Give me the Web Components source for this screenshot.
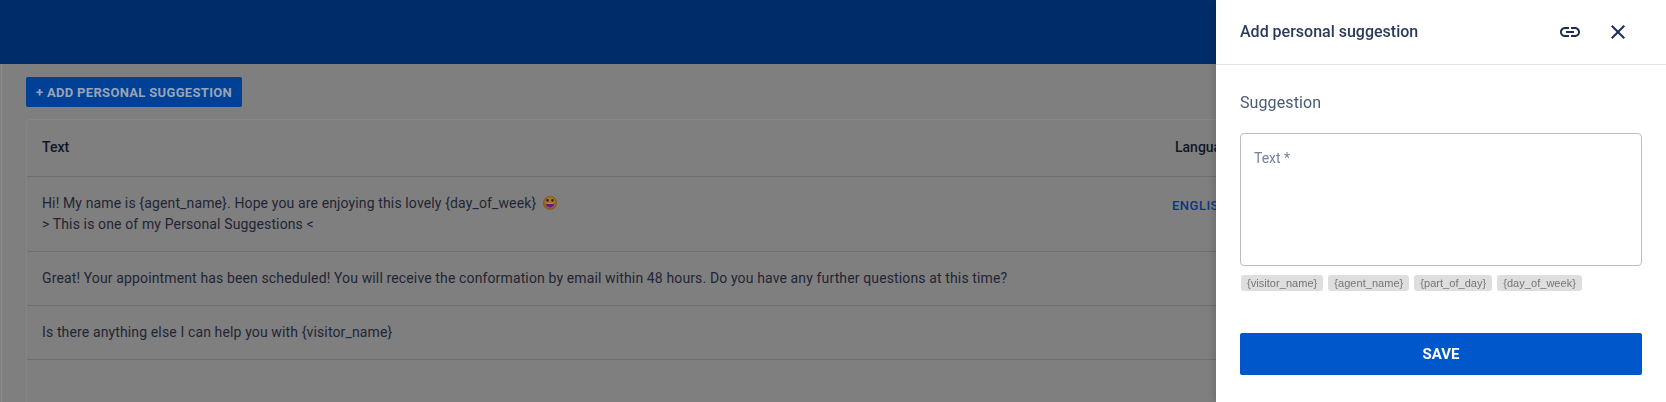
<!DOCTYPE html>
<html>
<head>
<meta charset="utf-8">
<title>Personal suggestions</title>
<style>
  html, body { margin: 0; height: 402px; overflow: hidden; background: #7f7f7f; }
  body { font-family: Roboto, "Liberation Sans", sans-serif; }
</style>
</head>
<body>
<suggestions-page>
  <add-button>+ ADD PERSONAL SUGGESTION</add-button>
  <suggestion-table>
    <suggestion-row lang="ENGLISH">Hi! My name is {agent_name}. Hope you are enjoying this lovely {day_of_week} <grin-emoji></grin-emoji><br>&gt; This is one of my Personal Suggestions &lt;</suggestion-row>
    <suggestion-row>Great! Your appointment has been scheduled! You will receive the conformation by email within 48 hours. Do you have any further questions at this time?</suggestion-row>
    <suggestion-row>Is there anything else I can help you with {visitor_name}</suggestion-row>
  </suggestion-table>
</suggestions-page>
<side-panel heading="Add personal suggestion">
  <tag-chip>{visitor_name}</tag-chip>
  <tag-chip>{agent_name}</tag-chip>
  <tag-chip>{part_of_day}</tag-chip>
  <tag-chip>{day_of_week}</tag-chip>
</side-panel>

<script>
class SuggestionsPage extends HTMLElement {
  constructor() {
    super();
    this.attachShadow({ mode: "open" });
    this.shadowRoot.innerHTML = `
      <style>
        :host { display: flex; flex-direction: column; height: 402px; overflow: hidden; }
        .top { height: 64px; flex: none; background: #002d69; }
        .main {
          flex: 1;
          margin-left: 1px;
          border-left: 1px solid #8c8c8c;
          padding: 13px 26px 0 24px;
          display: flex;
          flex-direction: column;
          gap: 12px;
          align-items: flex-start;
        }
      </style>
      <div class="top"></div>
      <div class="main"><slot></slot></div>
    `;
  }
}
customElements.define("suggestions-page", SuggestionsPage);

class AddButton extends HTMLElement {
  constructor() {
    super();
    this.attachShadow({ mode: "open" });
    this.shadowRoot.innerHTML = `
      <style>
        :host {
          display: flex;
          align-items: center;
          height: 30px;
          padding: 0 10px;
          background: #004097;
          border-radius: 2px;
          color: #9aa4b4;
          font: 700 13px Roboto, sans-serif;
          letter-spacing: .32px;
          white-space: nowrap;
        }
      </style>
      <slot></slot>
    `;
  }
}
customElements.define("add-button", AddButton);

class SuggestionTable extends HTMLElement {
  constructor() {
    super();
    this.attachShadow({ mode: "open" });
    this.shadowRoot.innerHTML = `
      <style>
        :host {
          display: block;
          flex: 1;
          align-self: stretch;
          border: 1px solid #868686;
          border-bottom: 0;
          border-radius: 4px 4px 0 0;
          font: 14px/21px Roboto, sans-serif;
          letter-spacing: .13px;
          color: #1f2533;
        }
        .head {
          display: grid;
          grid-template-columns: 1148px 1fr;
          height: 57px;
          box-sizing: border-box;
          padding-bottom: 2px;
          align-items: center;
          border-bottom: 1px solid #6f6f6f;
          font-weight: 500;
          letter-spacing: 0;
          color: #111729;
        }
        .head span:first-child { padding-left: 15px; }
      </style>
      <div class="head"><span>Text</span><span>Language</span></div>
      <slot></slot>
    `;
  }
}
customElements.define("suggestion-table", SuggestionTable);

class SuggestionRow extends HTMLElement {
  constructor() {
    super();
    this.attachShadow({ mode: "open" });
    const lang = this.getAttribute("lang") || "";
    this.shadowRoot.innerHTML = `
      <style>
        :host {
          display: grid;
          grid-template-columns: 1148px 1fr;
          border-bottom: 1px solid #6f6f6f;
          padding: 16px 0;
        }
        .text { padding-left: 15px; white-space: nowrap; }
        .lang {
          margin: 2px 0 0 -3px;
          font-size: 13px;
          font-weight: 500;
          letter-spacing: .5px;
          color: #0c3580;
        }
      </style>
      <div class="text"><slot></slot></div>
      <div class="lang">${lang}</div>
    `;
  }
}
customElements.define("suggestion-row", SuggestionRow);

class GrinEmoji extends HTMLElement {
  constructor() {
    super();
    this.attachShadow({ mode: "open" });
    this.shadowRoot.innerHTML = `
      <style>
        :host { display: inline-block; width: 14px; height: 14px; margin-left: 3px; vertical-align: -2px; }
        svg { display: block; }
      </style>
      <svg width="14" height="14" viewBox="0 0 14 14">
        <circle cx="7" cy="7" r="7" fill="#8a5a1c"/>
        <circle cx="7" cy="6.6" r="5.6" fill="#a0752a"/>
        <ellipse cx="4.5" cy="4.3" rx="1.1" ry="1.4" fill="#2e2210"/>
        <ellipse cx="9.5" cy="4.3" rx="1.1" ry="1.4" fill="#2e2210"/>
        <path d="M2.6 7h8.8c0 2.6-2 4.6-4.4 4.6S2.6 9.6 2.6 7z" fill="#6a1580"/>
        <path d="M3.2 7h7.6v.7H3.2z" fill="#b9aeb0"/>
      </svg>
    `;
  }
}
customElements.define("grin-emoji", GrinEmoji);

class SidePanel extends HTMLElement {
  constructor() {
    super();
    this.attachShadow({ mode: "open" });
    const heading = this.getAttribute("heading");
    this.shadowRoot.innerHTML = `
      <style>
        :host {
          position: fixed;
          top: 0;
          right: 0;
          bottom: 0;
          width: 450px;
          background: #fff;
          box-shadow: -3px 0 6px rgba(0,0,0,.12);
          font-family: Roboto, sans-serif;
          color: #2c3e5d;
        }
        header {
          height: 65px;
          box-sizing: border-box;
          border-bottom: 1px solid #e2e2e2;
          display: flex;
          align-items: center;
          padding: 0 36px 0 24px;
          font-size: 16px;
          font-weight: 500;
          color: #2a3b59;
        }
        header span { flex: 1; padding-bottom: 2px; }
        .icons { display: flex; gap: 24px; }
        svg { display: block; fill: #1b2f56; }
        .body { padding: 28px 24px 0; }
        h3 { margin: 0; font-size: 16px; font-weight: 400; line-height: 20px; letter-spacing: .1px; color: #4a5a75; }
        .field {
          margin-top: 20px;
          height: 133px;
          box-sizing: border-box;
          border: 1px solid #bdbdbd;
          border-radius: 4px;
          padding: 15px 13px;
          font-size: 14px;
          line-height: 18px;
          color: #76809a;
        }
        .chips { display: flex; gap: 5px; margin-top: 9px; padding-left: 1px; }
        .save {
          margin-top: 42px;
          height: 42px;
          display: flex;
          align-items: center;
          justify-content: center;
          background: #0057cc;
          border-radius: 2px;
          color: #fff;
          font-size: 15px;
          font-weight: 700;
        }
      </style>
      <header>
        <span>${heading}</span>
        <div class="icons">
          <svg width="24" height="24" viewBox="0 0 24 24"><path d="M3.9 12c0-1.71 1.39-3.1 3.1-3.1h4V7H7c-2.76 0-5 2.24-5 5s2.24 5 5 5h4v-1.9H7c-1.71 0-3.1-1.39-3.1-3.1zM8 13h8v-2H8v2zm9-6h-4v1.9h4c1.71 0 3.1 1.39 3.1 3.1s-1.39 3.1-3.1 3.1h-4V17h4c2.76 0 5-2.24 5-5s-2.24-5-5-5z"/></svg>
          <svg width="24" height="24" viewBox="0 0 24 24"><path d="M19 6.41 17.59 5 12 10.59 6.41 5 5 6.41 10.59 12 5 17.59 6.41 19 12 13.41 17.59 19 19 17.59 13.41 12z"/></svg>
        </div>
      </header>
      <div class="body">
        <h3>Suggestion</h3>
        <div class="field">Text *</div>
        <div class="chips"><slot></slot></div>
        <div class="save">SAVE</div>
      </div>
    `;
  }
}
customElements.define("side-panel", SidePanel);

class TagChip extends HTMLElement {
  constructor() {
    super();
    this.attachShadow({ mode: "open" });
    this.shadowRoot.innerHTML = `
      <style>
        :host {
          display: block;
          height: 16px;
          padding: 0 6px;
          background: #dedede;
          border-radius: 3px;
          color: #757575;
          font: 11px/16px "Liberation Sans", Arial, sans-serif;
          letter-spacing: .04px;
          white-space: nowrap;
        }
      </style>
      <slot></slot>
    `;
  }
}
customElements.define("tag-chip", TagChip);
</script>
</body>
</html>
